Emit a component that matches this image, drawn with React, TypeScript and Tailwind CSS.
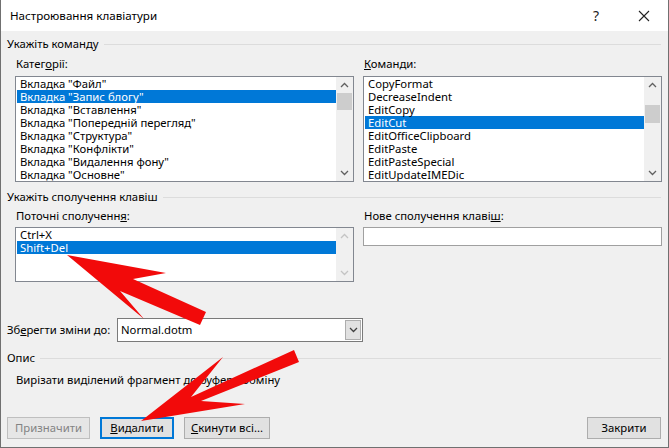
import React from "react";

const FONT = "font-['Noto_Sans','Segoe_UI',sans-serif]";

function Chev({ up, color }: { up?: boolean; color: string }) {
  return (
    <svg width="9" height="6" viewBox="0 0 9 6">
      <path
        d={up ? "M1 5 L4.5 1.5 L8 5" : "M1 1 L4.5 4.5 L8 1"}
        stroke={color}
        strokeWidth="1.3"
        fill="none"
      />
    </svg>
  );
}

function ScrollBar({
  thumbTop,
  thumbH,
  disabled,
}: {
  thumbTop?: number;
  thumbH?: number;
  disabled?: boolean;
}) {
  const c = disabled ? "#c4c4c4" : "#606060";
  return (
    <div className="flex w-[17px] flex-col bg-[#f0f0f0]">
      <div className="flex h-[16px] items-center justify-center">
        <Chev up color={c} />
      </div>
      <div className="flex flex-1 flex-col">
        {thumbH ? (
          <div
            className="mx-[1px] bg-[#cdcdcd]"
            style={{ marginTop: thumbTop, height: thumbH }}
          />
        ) : null}
      </div>
      <div className="flex h-[16px] items-center justify-center">
        <Chev color={c} />
      </div>
    </div>
  );
}

function ListBox({
  items,
  selected,
  height,
  thumbTop,
  thumbH,
  disabled,
}: {
  items: string[];
  selected: number;
  height: string;
  thumbTop?: number;
  thumbH?: number;
  disabled?: boolean;
}) {
  return (
    <div className={`flex border border-[#828790] bg-white ${height}`}>
      <div className="flex-1 overflow-hidden pl-[1px]">
        {items.map((it, i) => (
          <div
            key={i}
            className={`h-[13px] whitespace-nowrap pl-[3px] text-[11.3px] leading-[13px] ${
              i === selected ? "bg-[#0078d7] text-white" : "text-black"
            }`}
          >
            {it}
          </div>
        ))}
      </div>
      <ScrollBar thumbTop={thumbTop} thumbH={thumbH} disabled={disabled} />
    </div>
  );
}

function GroupHeader({ text, className }: { text: string; className?: string }) {
  return (
    <div className={`flex h-[16px] items-center ${className ?? ""}`}>
      <span className="whitespace-nowrap text-[11.3px] leading-[16px]">{text}</span>
      <div className="ml-[5px] mr-[7px] flex-1 border-t border-[#dcdcdc]" />
    </div>
  );
}

function Btn({
  children,
  className,
  disabled,
  focused,
}: {
  children: React.ReactNode;
  className?: string;
  disabled?: boolean;
  focused?: boolean;
}) {
  return (
    <div
      className={`flex h-[22px] items-center justify-center text-[11.3px] leading-[16px] ${
        focused
          ? "border-2 border-[#0078d7] bg-[#e1e1e1]"
          : disabled
          ? "border border-[#bfbfbf] bg-[#e6e6e6] text-[#838383]"
          : "border border-[#adadad] bg-[#e1e1e1]"
      } ${className ?? ""}`}
    >
      {children}
    </div>
  );
}

export default function App() {
  const cats = [
    'Вкладка "Файл"',
    'Вкладка "Запис блогу"',
    'Вкладка "Вставлення"',
    'Вкладка "Попередній перегляд"',
    'Вкладка "Структура"',
    'Вкладка "Конфлікти"',
    'Вкладка "Видалення фону"',
    'Вкладка "Основне"',
  ];
  const cmds = [
    "CopyFormat",
    "DecreaseIndent",
    "EditCopy",
    "EditCut",
    "EditOfficeClipboard",
    "EditPaste",
    "EditPasteSpecial",
    "EditUpdateIMEDic",
  ];
  return (
    <div
      className={`relative flex h-[448px] w-[669px] flex-col overflow-hidden border-x border-b border-[#707070] bg-[#f0f0f0] text-black ${FONT}`}
    >
      {/* Title bar */}
      <div className="flex h-[31px] items-center bg-white pl-[9px]">
        <span className="text-[11.6px] leading-[16px]">Настроювання клавіатури</span>
        <div className="flex-1" />
        <span className="mr-[39px] text-[14px] leading-[16px] text-[#222]">?</span>
        <svg width="12" height="12" viewBox="0 0 12 12" className="mr-[18px]">
          <path d="M1 1 L11 11 M11 1 L1 11" stroke="#222" strokeWidth="1.1" />
        </svg>
      </div>

      {/* Body */}
      <div className="flex flex-col pl-[6px]">
        <GroupHeader text="Укажіть команду" className="mt-[5px]" />
        <div className="ml-[8px] mt-[4px] grid grid-cols-[339px_299px] gap-x-[9px]">
          <div className="h-[16px] pl-[1px] text-[11.3px] leading-[16px]">
            Катег<span className="underline">о</span>рії:
          </div>
          <div className="h-[16px] pl-[1px] text-[11.3px] leading-[16px]">
            <span className="underline">К</span>оманди:
          </div>
          <div className="mt-[4px]">
            <ListBox items={cats} selected={1} height="h-[106px]" thumbTop={0} thumbH={17} />
          </div>
          <div className="mt-[4px]">
            <ListBox items={cmds} selected={3} height="h-[106px]" thumbTop={12} thumbH={18} />
          </div>
        </div>

        <GroupHeader text="Укажіть сполучення клавіш" className="mt-[7px]" />
        <div className="ml-[8px] mt-[3px] grid grid-cols-[339px_299px] gap-x-[9px]">
          <div className="h-[16px] pl-[1px] text-[11.3px] leading-[16px]">
            Поточні сполученн<span className="underline">я</span>:
          </div>
          <div className="h-[16px] pl-[1px] text-[11.3px] leading-[16px]">
            Нове сполучення клаві<span className="underline">ш</span>:
          </div>
          <div className="mt-[3px]">
            <ListBox items={["Ctrl+X", "Shift+Del"]} selected={1} height="h-[55px]" disabled />
          </div>
          <div className="mt-[3px]">
            <div className="h-[19px] border border-[#a0a0a0] bg-white" />
          </div>
        </div>

        <div className="mt-[36px] flex h-[24px] items-center">
          <span className="w-[110px] whitespace-nowrap text-[11.3px] leading-[16px]">
            Зб<span className="underline">е</span>регти зміни до:
          </span>
          <div className="flex h-[24px] w-[246px] border border-[#7a7a7a] bg-white">
            <div className="flex flex-1 items-center pl-[3px] text-[11.3px] leading-[16px]">Normal.dotm</div>
            <div className="m-[1px] flex w-[16px] items-center justify-center border border-[#adadad] bg-[#e1e1e1]">
              <Chev color="#404040" />
            </div>
          </div>
        </div>

        <GroupHeader text="Опис" className="mt-[8px]" />
        <div className="ml-[9px] mt-[6px] h-[16px] text-[11.3px] leading-[16px]">
          Вирізати виділений фрагмент до буфера обміну
        </div>

        <div className="mt-[29px] flex items-center pr-[7px]">
          <Btn disabled className="w-[83px]">Призначити</Btn>
          <Btn focused className="ml-[10px] w-[74px]">
            <span>
              <span className="underline">В</span>идалити
            </span>
          </Btn>
          <Btn className="ml-[10px] w-[86px]">
            <span>
              <span className="underline">С</span>кинути всі...
            </span>
          </Btn>
          <div className="flex-1" />
          <Btn className="w-[74px]">Закрити</Btn>
        </div>
      </div>

      {/* Red annotation arrows */}
      <svg
        className="pointer-events-none absolute left-0 top-0"
        width="669"
        height="448"
        viewBox="0 0 669 448"
      >
        <polygon
          points="66,255 165,273 132,279 205,312 199,325 119,291 143,319"
          fill="#f20a0a"
        />
        <polygon
          points="140,421 222,357 190,397 293,350 298,362 200,401 244,404"
          fill="#f20a0a"
        />
      </svg>
    </div>
  );
}
